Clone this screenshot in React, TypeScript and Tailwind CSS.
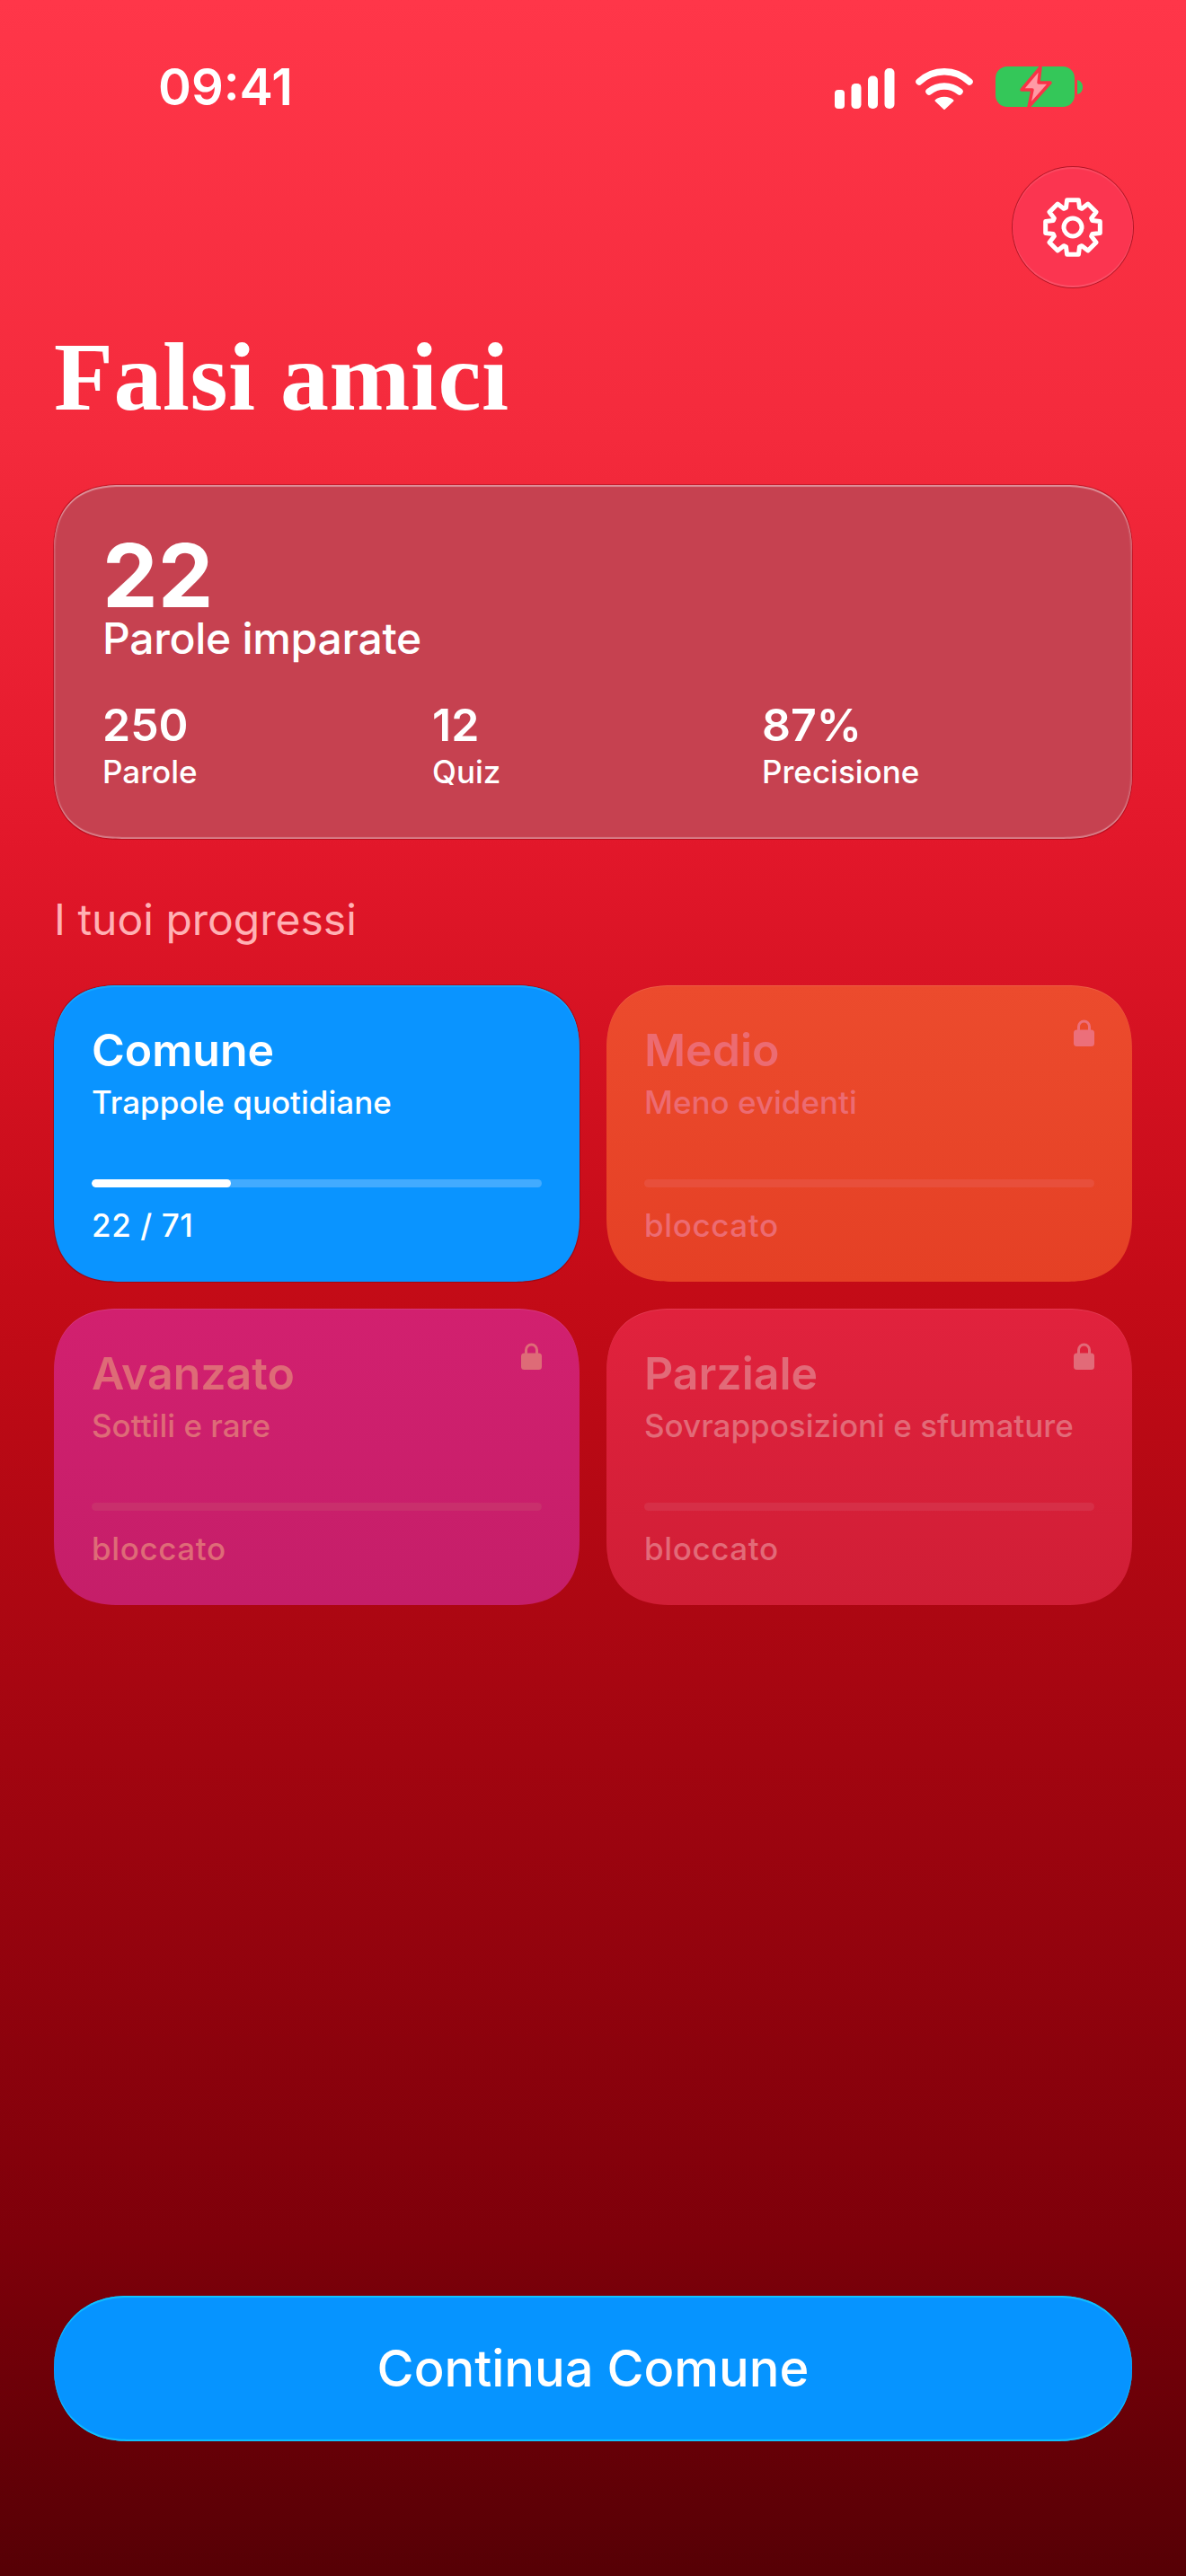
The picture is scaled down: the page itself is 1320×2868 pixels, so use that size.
import React from 'react';

const StatusBar = () => (
  <div className="flex h-[186px] shrink-0 items-start justify-between pt-[63px]">
    <span className="ml-[176px] text-[56px] font-semibold leading-[68px] text-white">09:41</span>
    <div className="flex items-start">
      <svg width="67" height="46" viewBox="0 0 67 46" className="mt-[13px]" fill="#fff">
        <rect x="0" y="24" width="11" height="21" rx="4" />
        <rect x="18.5" y="17" width="11" height="28" rx="4.5" />
        <rect x="37" y="8.500" width="11" height="36.500" rx="5" />
        <rect x="55.500" y="0" width="11" height="45" rx="5" />
      </svg>
      <svg width="64" height="48" viewBox="0 0 64 48" className="ml-[23px] mt-[12px]" fill="none" stroke="#fff" strokeLinecap="round">
        <path d="M4 16 C20 1 44 1 60 16" strokeWidth="7.500" />
        <path d="M15 27 C25 19 39 19 49 27" strokeWidth="7.500" />
        <path d="M32 46 L22.500 37 C27 32.500 37 32.500 41.500 37 Z" fill="#fff" stroke="#fff" strokeWidth="2" strokeLinejoin="round" />
      </svg>
      <svg width="98" height="50" viewBox="0 0 98 50" className="ml-[25px] mt-[10px]">
        <rect x="0" y="1" width="88" height="45" rx="13" fill="#34c759" />
        <path d="M91 16 C95 17 97 20 97 24 C97 28 95 31 91 32 Z" fill="#34c759" />
        <path d="M50 2 L29 27 H41 L37 46 L61 19 H48 Z" fill="#ff9aa5" stroke="#f93247" strokeWidth="3.500" strokeLinejoin="round" />
      </svg>
      <div className="w-[114px]" />
    </div>
  </div>
);

// eight flat teeth, one pointing straight up
const gearPath = () => {
  const pts: string[] = [];
  for (let i = 0; i < 8; i++) {
    const a = (i * Math.PI) / 4 - Math.PI / 2;
    const at = (r: number, d: number) => {
      const t = a + (d * Math.PI) / 180;
      return `${(34 + r * Math.cos(t)).toFixed(2)} ${(34 + r * Math.sin(t)).toFixed(2)}`;
    };
    pts.push(at(23, -19), at(31, -12), at(31, 12), at(23, 19));
  }
  return `M${pts.join(' L')} Z`;
};

const Gear = () => (
  <svg width="68" height="68" viewBox="0 0 68 68" fill="none" stroke="#fff" strokeWidth="5" strokeLinejoin="round">
    <path d={gearPath()} />
    <circle cx="34" cy="34" r="10" />
  </svg>
);

const Lock = ({ color }: { color: string }) => (
  <svg width="23" height="30" viewBox="0 0 23 30" className="absolute right-[42px] top-[38px]" fill={color}>
    <path d="M5.500 12 V8 a6 6 0 0 1 12 0 V12" fill="none" stroke={color} strokeWidth="3" />
    <rect x="0" y="11.500" width="23" height="18.500" rx="3.500" />
  </svg>
);

type Level = {
  title: string;
  sub: string;
  foot: string;
  bg: string;
  ink: string;
  track: string;
  edge: string;
  lockInk?: string;
  done?: number;
};

const levels: Level[] = [
  { title: 'Comune', sub: 'Trappole quotidiane', foot: '22 / 71', bg: 'bg-[#0a94ff]', ink: 'text-white', track: 'bg-[#42abff]', edge: 'shadow-[inset_0_2px_0_#12a8ff,0_0_0_1px_rgba(100,0,10,0.35)]', done: 31 },
  { title: 'Medio', sub: 'Meno evidenti', foot: 'bloccato', bg: 'bg-gradient-to-b from-[#ec4b2d] to-[#e54025]', ink: 'text-[#ec6b72]', track: 'bg-[#e84f3b]', edge: 'shadow-[inset_0_1px_0_rgba(255,255,255,0.1)]', lockInk: '#ec6f7a' },
  { title: 'Avanzato', sub: 'Sottili e rare', foot: 'bloccato', bg: 'bg-gradient-to-b from-[#d2206f] to-[#c51e69]', ink: 'text-[#de6b77]', track: 'bg-[#c92f6c]', edge: 'shadow-[inset_0_1px_0_rgba(255,255,255,0.1)]', lockInk: '#de6b77' },
  { title: 'Parziale', sub: 'Sovrapposizioni e sfumature', foot: 'bloccato', bg: 'bg-gradient-to-b from-[#e1223d] to-[#d01e36]', ink: 'text-[#e26a78]', track: 'bg-[#d62f47]', edge: 'shadow-[inset_0_1px_0_rgba(255,255,255,0.1)]', lockInk: '#e26a78' },
];

const LevelCard = ({ level }: { level: Level }) => (
  <div className={`relative flex h-[330px] flex-col rounded-[74px] px-[42px] pt-[44px] [corner-shape:superellipse(1.3)] ${level.bg} ${level.edge} ${level.ink}`}>
    <div className="text-[50px] font-semibold leading-[56px]">{level.title}</div>
    <div className="mt-[9px] text-[35px] font-medium leading-[42px]">{level.sub}</div>
    <div className={`mt-[65px] h-[9px] w-full overflow-hidden rounded-full ${level.track}`}>
      {level.done ? <div className="h-full rounded-full bg-white" style={{ width: `${level.done}%` }} /> : null}
    </div>
    <div className="mt-[21px] text-[35px] font-medium leading-[42px] tracking-[0.6px]">{level.foot}</div>
    {level.lockInk ? <Lock color={level.lockInk} /> : null}
  </div>
);

const Stat = ({ value, label }: { value: string; label: string }) => (
  <div>
    <div className="text-[50px] font-semibold leading-[56px]">{value}</div>
    <div className="mt-[3px] text-[35px] font-medium leading-[42px]">{label}</div>
  </div>
);

export default function App() {
  return (
    <div
      className="flex h-[2868px] w-[1320px] flex-col overflow-hidden bg-[linear-gradient(180deg,#ff3649_0%,#f42a3c_17%,#e2172a_33%,#c40b17_50%,#a20510_68%,#7e000a_87%,#560005_100%)] px-[60px] text-white"
      style={{ fontFamily: 'Inter, sans-serif' }}
    >
      <div className="-mx-[60px]">
        <StatusBar />
      </div>

      <div className="-mr-px flex justify-end">
        <button className="flex h-[134px] w-[134px] items-center justify-center rounded-full bg-[#fb3550] shadow-[0_0_0_1px_rgba(120,0,15,0.55),inset_0_-2px_1px_rgba(255,255,255,0.14),inset_0_2px_1px_rgba(255,255,255,0.1)]">
          <Gear />
        </button>
      </div>

      <h1 className="mt-[38px] whitespace-nowrap text-[108px] font-bold leading-[124px] tracking-[0.5px]" style={{ fontFamily: '"Liberation Serif", serif' }}>
        Falsi amici
      </h1>

      <section className="mt-[58px] h-[394px] rounded-[76px] bg-[#c64150] pl-[54px] pr-[45px] pt-[57px] [corner-shape:superellipse(1.3)] shadow-[inset_0_2px_1px_rgba(255,255,255,0.4),inset_0_-2px_1px_rgba(255,255,255,0.3),inset_2px_0_1px_rgba(255,255,255,0.12),inset_-2px_0_1px_rgba(255,255,255,0.12),0_0_0_1px_rgba(120,0,15,0.35)]">
        <div className="text-[98px] font-bold leading-[88px]">22</div>
        <div className="-mt-[3px] text-[48px] font-medium leading-[58px] tracking-[-0.3px]">Parole imparate</div>
        <div className="mt-[39px] grid grid-cols-3">
          <Stat value="250" label="Parole" />
          <Stat value="12" label="Quiz" />
          <Stat value="87%" label="Precisione" />
        </div>
      </section>

      <h2 className="mt-[60px] text-[48px] font-normal leading-[60px] text-[#ffb1b4]">I tuoi progressi</h2>

      <div className="mt-[43px] grid grid-cols-2 gap-[30px]">
        {levels.map(level => (
          <LevelCard key={level.title} level={level} />
        ))}
      </div>

      <button className="mb-[150px] mt-auto flex h-[162px] w-full items-center justify-center rounded-[81px] bg-[#0694ff] text-[56px] font-medium text-white [corner-shape:superellipse(1.1)] shadow-[inset_0_2px_1px_#10c4ff,inset_0_-2px_1px_#10c4ff]">
        Continua Comune
      </button>
    </div>
  );
}
